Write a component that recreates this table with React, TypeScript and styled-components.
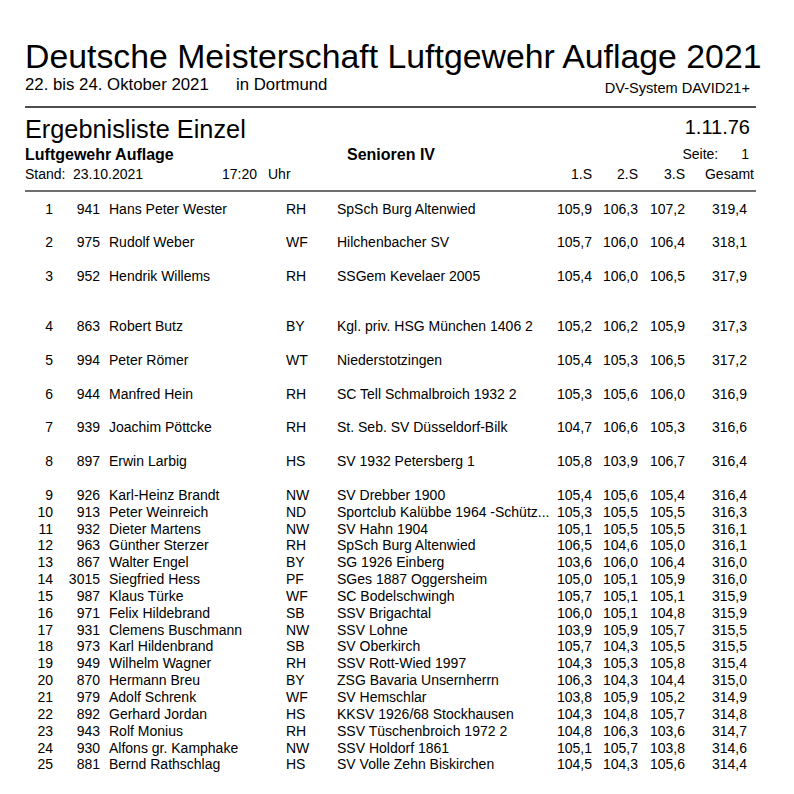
import React from "react";
import styled, { createGlobalStyle } from "styled-components";

type Entry = {
  rank: number;
  nr: string;
  name: string;
  lv: string;
  club: string;
  s1: string;
  s2: string;
  s3: string;
  total: string;
};

const entries: Entry[] = [
  { rank: 1, nr: "941", name: "Hans Peter Wester", lv: "RH", club: "SpSch Burg Altenwied", s1: "105,9", s2: "106,3", s3: "107,2", total: "319,4" },
  { rank: 2, nr: "975", name: "Rudolf Weber", lv: "WF", club: "Hilchenbacher SV", s1: "105,7", s2: "106,0", s3: "106,4", total: "318,1" },
  { rank: 3, nr: "952", name: "Hendrik Willems", lv: "RH", club: "SSGem Kevelaer 2005", s1: "105,4", s2: "106,0", s3: "106,5", total: "317,9" },
  { rank: 4, nr: "863", name: "Robert Butz", lv: "BY", club: "Kgl. priv. HSG München 1406 2", s1: "105,2", s2: "106,2", s3: "105,9", total: "317,3" },
  { rank: 5, nr: "994", name: "Peter Römer", lv: "WT", club: "Niederstotzingen", s1: "105,4", s2: "105,3", s3: "106,5", total: "317,2" },
  { rank: 6, nr: "944", name: "Manfred Hein", lv: "RH", club: "SC Tell Schmalbroich 1932 2", s1: "105,3", s2: "105,6", s3: "106,0", total: "316,9" },
  { rank: 7, nr: "939", name: "Joachim Pöttcke", lv: "RH", club: "St. Seb. SV Düsseldorf-Bilk", s1: "104,7", s2: "106,6", s3: "105,3", total: "316,6" },
  { rank: 8, nr: "897", name: "Erwin Larbig", lv: "HS", club: "SV 1932 Petersberg 1", s1: "105,8", s2: "103,9", s3: "106,7", total: "316,4" },
  { rank: 9, nr: "926", name: "Karl-Heinz Brandt", lv: "NW", club: "SV Drebber 1900", s1: "105,4", s2: "105,6", s3: "105,4", total: "316,4" },
  { rank: 10, nr: "913", name: "Peter Weinreich", lv: "ND", club: "Sportclub Kalübbe 1964 -Schütz...", s1: "105,3", s2: "105,5", s3: "105,5", total: "316,3" },
  { rank: 11, nr: "932", name: "Dieter Martens", lv: "NW", club: "SV Hahn 1904", s1: "105,1", s2: "105,5", s3: "105,5", total: "316,1" },
  { rank: 12, nr: "963", name: "Günther Sterzer", lv: "RH", club: "SpSch Burg Altenwied", s1: "106,5", s2: "104,6", s3: "105,0", total: "316,1" },
  { rank: 13, nr: "867", name: "Walter Engel", lv: "BY", club: "SG 1926 Einberg", s1: "103,6", s2: "106,0", s3: "106,4", total: "316,0" },
  { rank: 14, nr: "3015", name: "Siegfried Hess", lv: "PF", club: "SGes 1887 Oggersheim", s1: "105,0", s2: "105,1", s3: "105,9", total: "316,0" },
  { rank: 15, nr: "987", name: "Klaus Türke", lv: "WF", club: "SC Bodelschwingh", s1: "105,7", s2: "105,1", s3: "105,1", total: "315,9" },
  { rank: 16, nr: "971", name: "Felix Hildebrand", lv: "SB", club: "SSV Brigachtal", s1: "106,0", s2: "105,1", s3: "104,8", total: "315,9" },
  { rank: 17, nr: "931", name: "Clemens Buschmann", lv: "NW", club: "SSV Lohne", s1: "103,9", s2: "105,9", s3: "105,7", total: "315,5" },
  { rank: 18, nr: "973", name: "Karl Hildenbrand", lv: "SB", club: "SV Oberkirch", s1: "105,7", s2: "104,3", s3: "105,5", total: "315,5" },
  { rank: 19, nr: "949", name: "Wilhelm Wagner", lv: "RH", club: "SSV Rott-Wied 1997", s1: "104,3", s2: "105,3", s3: "105,8", total: "315,4" },
  { rank: 20, nr: "870", name: "Hermann Breu", lv: "BY", club: "ZSG Bavaria Unsernherrn", s1: "106,3", s2: "104,3", s3: "104,4", total: "315,0" },
  { rank: 21, nr: "979", name: "Adolf Schrenk", lv: "WF", club: "SV Hemschlar", s1: "103,8", s2: "105,9", s3: "105,2", total: "314,9" },
  { rank: 22, nr: "892", name: "Gerhard Jordan", lv: "HS", club: "KKSV 1926/68 Stockhausen", s1: "104,3", s2: "104,8", s3: "105,7", total: "314,8" },
  { rank: 23, nr: "943", name: "Rolf Monius", lv: "RH", club: "SSV Tüschenbroich 1972 2", s1: "104,8", s2: "106,3", s3: "103,6", total: "314,7" },
  { rank: 24, nr: "930", name: "Alfons gr. Kamphake", lv: "NW", club: "SSV Holdorf 1861", s1: "105,1", s2: "105,7", s3: "103,8", total: "314,6" },
  { rank: 25, nr: "881", name: "Bernd Rathschlag", lv: "HS", club: "SV Volle Zehn Biskirchen", s1: "104,5", s2: "104,3", s3: "105,6", total: "314,4" },
];

// rank | start no | name | LV | club | 1.S | 2.S | 3.S | total
const COLS = "28px 47px 186px 51px 215px 40px 46px 47px 62px";

const GlobalStyle = createGlobalStyle`
  body {
    margin: 0;
    background: #fff;
    color: #000;
    font-family: "Liberation Sans", Arial, sans-serif;
  }
`;

const Page = styled.div`
  width: 731px;
  margin-left: 25px;
  padding-top: 37px;
`;

const Title = styled.h1`
  margin: 0;
  font-size: 33.8px;
  font-weight: normal;
  line-height: 38px;
  white-space: nowrap;
`;

const SubRow = styled.div`
  display: flex;
  align-items: flex-start;
  justify-content: space-between;
  font-size: 16.8px;
  line-height: 20px;
`;

const Field = styled.span<{ $w?: number }>`
  display: inline-block;
  width: ${(p) => (p.$w ? `${p.$w}px` : "auto")};
  white-space: nowrap;
`;

const System = styled.span`
  font-size: 14.6px;
  line-height: 18px;
  margin-top: 4px;
  margin-right: 6px;
`;

const Rule = styled.hr<{ $tone: string; $top: number }>`
  margin: ${(p) => p.$top}px 0 0;
  border: 0;
  height: 2px;
  background: ${(p) => p.$tone};
`;

const HeadRow = styled.div`
  display: flex;
  align-items: flex-start;
  justify-content: space-between;
  margin-top: 6px;
`;

const ListTitle = styled.div`
  font-size: 25.3px;
  line-height: 30px;
`;

const ListNo = styled.div`
  font-size: 20px;
  line-height: 26px;
  margin-right: 6px;
`;

const InfoRow = styled.div`
  display: flex;
  align-items: flex-start;
  margin-top: 1px;
`;

const Bold = styled.span<{ $w?: number }>`
  display: inline-block;
  width: ${(p) => (p.$w ? `${p.$w}px` : "auto")};
  font-size: 16px;
  font-weight: bold;
  line-height: 20px;
  white-space: nowrap;
`;

const Page1 = styled.div`
  margin-left: auto;
  margin-right: 7px;
  font-size: 14px;
  line-height: 18px;
  display: flex;
  gap: 23px;
`;

const Grid = styled.div`
  display: grid;
  grid-template-columns: ${COLS};
  font-size: 14px;
  white-space: nowrap;
`;

const StandRow = styled(Grid)`
  line-height: 18px;
`;

const StandCell = styled.div`
  grid-column: 1 / 6;
  display: flex;
`;

const ColHead = styled.div<{ $shift?: number }>`
  text-align: right;
  margin-right: ${(p) => (p.$shift ? `-${p.$shift}px` : "0")};
`;

const Rows = styled.div`
  padding-top: 8.5px;
`;

const Row = styled(Grid)<{ $wide: boolean; $gap: boolean }>`
  line-height: 16.85px;
  padding-bottom: ${(p) => (p.$wide ? "16.85px" : "0")};
  margin-bottom: ${(p) => (p.$gap ? "16.85px" : "0")};
`;

const Num = styled.div`
  text-align: right;
`;

const Text = styled.div<{ $pad?: number }>`
  padding-left: ${(p) => p.$pad ?? 0}px;
  overflow: hidden;
`;

export default function App() {
  return (
    <>
      <GlobalStyle />
      <Page>
        <Title>Deutsche Meisterschaft Luftgewehr Auflage 2021</Title>
        <SubRow>
          <span>
            <Field $w={211}>22. bis 24. Oktober 2021</Field>
            <Field>in Dortmund</Field>
          </span>
          <System>DV-System DAVID21+</System>
        </SubRow>
        <Rule $tone="#4d4d4d" $top={9} />

        <HeadRow>
          <ListTitle>Ergebnisliste Einzel</ListTitle>
          <ListNo>1.11.76</ListNo>
        </HeadRow>
        <InfoRow>
          <Bold $w={322}>Luftgewehr Auflage</Bold>
          <Bold>Senioren IV</Bold>
          <Page1>
            <span>Seite:</span>
            <span>1</span>
          </Page1>
        </InfoRow>
        <StandRow>
          <StandCell>
            <Field $w={48}>Stand:</Field>
            <Field $w={149}>23.10.2021</Field>
            <Field $w={46}>17:20</Field>
            <Field>Uhr</Field>
          </StandCell>
          <ColHead>1.S</ColHead>
          <ColHead>2.S</ColHead>
          <ColHead>3.S</ColHead>
          <ColHead $shift={7}>Gesamt</ColHead>
        </StandRow>
        <Rule $tone="#6e6e6e" $top={7} />

        <Rows>
          {entries.map((e) => (
            <Row key={e.rank} $wide={e.rank <= 8} $gap={e.rank === 3}>
              <Num>{e.rank}</Num>
              <Num>{e.nr}</Num>
              <Text $pad={9}>{e.name}</Text>
              <Text>{e.lv}</Text>
              <Text>{e.club}</Text>
              <Num>{e.s1}</Num>
              <Num>{e.s2}</Num>
              <Num>{e.s3}</Num>
              <Num>{e.total}</Num>
            </Row>
          ))}
        </Rows>
      </Page>
    </>
  );
}
